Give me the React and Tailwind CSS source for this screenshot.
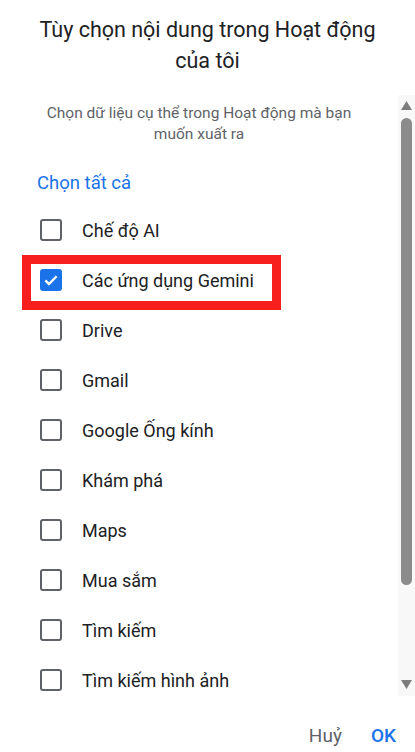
const items = [
  { label: "Chế độ AI", checked: false },
  { label: "Các ứng dụng Gemini", checked: true, marked: true },
  { label: "Drive", checked: false },
  { label: "Gmail", checked: false },
  { label: "Google Ống kính", checked: false },
  { label: "Khám phá", checked: false },
  { label: "Maps", checked: false },
  { label: "Mua sắm", checked: false },
  { label: "Tìm kiếm", checked: false },
  { label: "Tìm kiếm hình ảnh", checked: false },
];

const Checkbox = ({ checked }) => {
  if (checked) {
    return (
      <div className="w-[22px] h-[22px] rounded-[3px] bg-[#1a73e8] flex items-center justify-center shrink-0">
        <svg width="18" height="18" viewBox="0 0 24 24" fill="none">
          <path d="M4.5 12.5l4.8 4.8L19.5 7" stroke="white" strokeWidth="3.2" />
        </svg>
      </div>
    );
  }
  return <div className="w-[22px] h-[22px] rounded-[3px] border-[2.5px] border-[#5f6368] shrink-0"></div>;
};

const Row = ({ item }) => {
  return (
    <div className="relative h-[50px] flex items-center pl-10 gap-5">
      <Checkbox checked={item.checked} />
      <span className="text-[18px] text-[#202124]">{item.label}</span>
      {item.marked && (
        <div className="absolute left-[22px] top-0 w-[259px] h-[55px] border-[9px] border-[#f81f1f]"></div>
      )}
    </div>
  );
};

export default function App() {
  return (
    <div
      className="w-[415px] h-[752px] bg-white flex flex-col overflow-hidden"
      style={{ fontFamily: "Roboto, 'Noto Sans', sans-serif" }}
    >
      <div className="pt-[14px] px-8 h-[95px]">
        <h1 className="text-[21.5px] leading-[31px] text-[#202124] text-center font-normal">
          Tùy chọn nội dung trong Hoạt động của tôi
        </h1>
      </div>
      <div className="flex h-[601px]">
        <div className="flex-1 pt-[8px]">
          <p className="text-[15.5px] leading-[21px] text-[#5f6368] text-center px-9">
            Chọn dữ liệu cụ thể trong Hoạt động mà bạn muốn xuất ra
          </p>
          <div className="pl-[37px] pt-[26px] pb-[9px] text-[18.5px] leading-[24px] text-[#1a73e8]">Chọn tất cả</div>
          <div className="pt-[1px]">
            {items.map((item) => (
              <Row key={item.label} item={item} />
            ))}
          </div>
        </div>
        <div className="w-[17px] bg-[#f8f8f8] flex flex-col items-center pt-[6px]">
          <svg width="11" height="9" viewBox="0 0 11 9">
            <path d="M5.5 0L11 9H0z" fill="#7d7d7d" />
          </svg>
          <div className="w-[11px] h-[467px] mt-[8px] rounded-full bg-[#8b8b8b]"></div>
          <div className="flex-1"></div>
          <svg width="11" height="9" viewBox="0 0 11 9" className="mb-[7px]">
            <path d="M0 0H11L5.5 9z" fill="#7d7d7d" />
          </svg>
        </div>
      </div>
      <div className="flex-1 flex items-start justify-end gap-[29px] pr-[19px] pt-[26px] text-[19px] leading-[28px]">
        <span className="text-[#5f6368]">Huỷ</span>
        <span className="text-[#1a73e8] font-medium">OK</span>
      </div>
    </div>
  );
}
